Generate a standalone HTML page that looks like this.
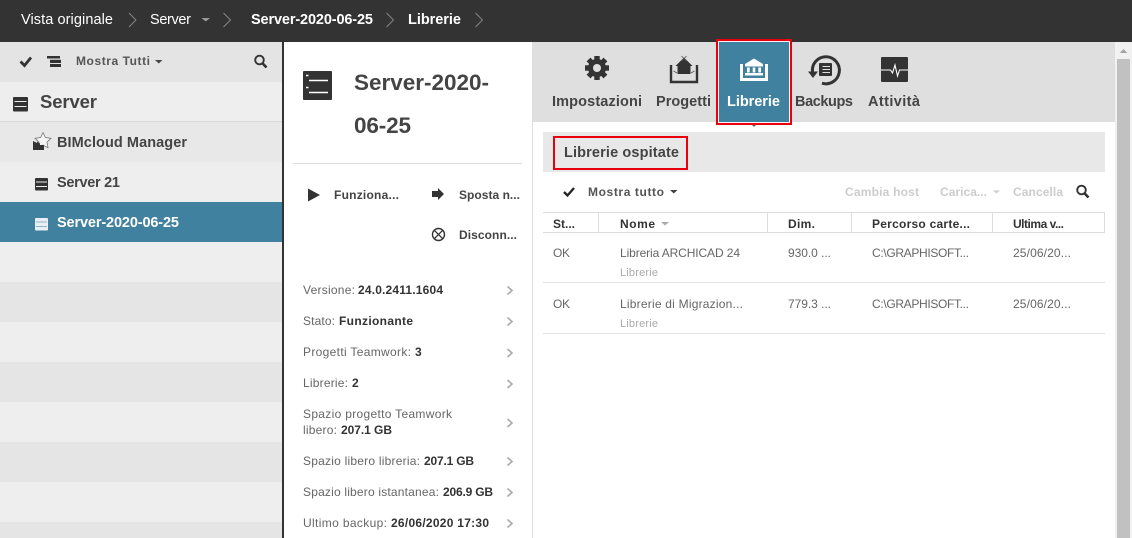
<!DOCTYPE html>
<html lang="it"><head><meta charset="utf-8"><title>Server-2020-06-25</title>
<style>
html,body{margin:0;padding:0;background:#fff;width:1132px;height:538px;overflow:hidden}
svg{display:block}
text{font-family:"Liberation Sans",sans-serif;white-space:pre}
.h{font-size:14.5px;fill:#fff}
.hb{font-size:14.5px;fill:#fff;font-weight:700}
.b14{font-size:14.5px;font-weight:700;fill:#444}
.b12{font-size:12px;font-weight:700;fill:#444}
.r12{font-size:12px;fill:#666}
.d12{font-size:12px;font-weight:700;fill:#333}
.g12{font-size:12px;font-weight:700;fill:#ccc}
.s{font-size:11px;fill:#aaa}
.chev{fill:none;stroke:#aaa;stroke-width:1.600}
.hc{fill:none;stroke:#8a8a8a;stroke-width:.9}
</style></head><body>
<svg width="1132" height="538" viewBox="0 0 1132 538" xmlns="http://www.w3.org/2000/svg">
<!-- header -->
<rect width="1132" height="42" fill="#333"/>
<text class="h" x="21" y="24" textLength="92" lengthAdjust="spacing">Vista originale</text>
<path class="hc" d="M129 13l7 7-7 7"/>
<text class="h" x="150" y="24" textLength="41" lengthAdjust="spacing">Server</text>
<path d="M201.500 18h8.500l-4.250 3.500z" fill="#999"/>
<path class="hc" d="M223.500 13l7 7-7 7"/>
<text class="hb" x="251" y="24" textLength="122" lengthAdjust="spacing">Server-2020-06-25</text>
<path class="hc" d="M386.500 13l7 7-7 7"/>
<text class="hb" x="408" y="24" textLength="53" lengthAdjust="spacing">Librerie</text>
<path class="hc" d="M475.500 13l7 7-7 7"/>

<!-- sidebar -->
<rect y="42" width="282" height="40" fill="#e4e4e4"/>
<rect y="82" width="282" height="40" fill="#eee"/>
<rect y="121" width="282" height="1" fill="#d8d8d8"/>
<rect y="122" width="282" height="40" fill="#e8e8e8"/>
<rect y="162" width="282" height="40" fill="#eee"/>
<rect y="202" width="282" height="40" fill="#40819f"/>
<rect y="242" width="282" height="40" fill="#eee"/>
<rect y="282" width="282" height="40" fill="#e5e5e5"/>
<rect y="322" width="282" height="40" fill="#eee"/>
<rect y="362" width="282" height="40" fill="#e5e5e5"/>
<rect y="402" width="282" height="40" fill="#eee"/>
<rect y="442" width="282" height="40" fill="#e5e5e5"/>
<rect y="482" width="282" height="40" fill="#eee"/>
<rect y="522" width="282" height="16" fill="#e5e5e5"/>
<rect x="282" y="42" width="2" height="496" fill="#333"/>

<path d="M20.500 61.500l4 4 6.500-8" fill="none" stroke="#333" stroke-width="2.800"/>
<path d="M47 56h13v2.500H47zM50 59.800h11v3.200H50zM50 64h11v3H50z" fill="#333"/>
<text class="b12" x="76" y="65" textLength="74" lengthAdjust="spacing" style="fill:#555">Mostra Tutti</text>
<path d="M155 60h7.500l-3.750 3.500z" fill="#444"/>
<circle cx="259.500" cy="60" r="4.300" fill="none" stroke="#333" stroke-width="1.900"/>
<path d="M262.500 63.200l4 4.300" stroke="#333" stroke-width="2.600"/>

<rect x="13" y="97" width="15" height="14.500" rx="1" fill="#333"/>
<path d="M14.500 101.500h12M14.500 106.500h12" stroke="#eee" stroke-width="1"/>
<text x="40" y="108" font-size="18.500" font-weight="700" fill="#444" textLength="57" lengthAdjust="spacing">Server</text>

<path d="M43 132.500l2.400 5 5.600.800-4 3.900 1 5.500-5-2.600-5 2.600 1-5.500-4-3.900 5.600-.800z" fill="#f4f4f4" stroke="#777" stroke-width=".8"/>
<path d="M33 150v-9l4 2v-1.500l3 2v1.500h4v5z" fill="#333"/>
<text class="b14" x="57" y="147" textLength="130" lengthAdjust="spacing">BIMcloud Manager</text>

<rect x="35" y="178" width="13" height="12.500" rx="1" fill="#333"/>
<path d="M36 182h11M36 186.500h11" stroke="#eee" stroke-width="1"/>
<text class="b14" x="57" y="187" textLength="63" lengthAdjust="spacing">Server 21</text>

<rect x="35" y="218" width="13" height="12.500" rx="1" fill="#e8f0f4"/>
<path d="M36 222h11M36 226.500h11" stroke="#8fb6c8" stroke-width="1"/>
<text class="hb" x="57" y="227" textLength="122" lengthAdjust="spacing">Server-2020-06-25</text>

<!-- middle panel -->
<rect x="532" y="42" width="1" height="496" fill="#ddd"/>
<rect x="303" y="71" width="29" height="29" rx="1" fill="#333"/>
<path d="M309 80.500h19M309 92.500h19" stroke="#fff" stroke-width="1.500"/>
<path d="M306 75.500h2.500M306 87.500h2.500" stroke="#fff" stroke-width="1.500"/>
<text x="354" y="90" font-size="22.500" font-weight="700" fill="#444" textLength="135" lengthAdjust="spacing">Server-2020-</text>
<text x="354" y="133" font-size="22.500" font-weight="700" fill="#444" textLength="57" lengthAdjust="spacing">06-25</text>
<rect x="293" y="163" width="229" height="1" fill="#ddd"/>

<path d="M308 188.500l12 6.500-12 6.500z" fill="#333"/>
<text class="b12" x="334" y="199" textLength="65" lengthAdjust="spacing">Funziona...</text>
<path d="M432 191h6v-3l6 6-6 6v-3h-6z" fill="#333"/>
<text class="b12" x="459" y="199" textLength="61" lengthAdjust="spacing">Sposta n...</text>
<circle cx="438.500" cy="234.500" r="6" fill="none" stroke="#333" stroke-width="1.400"/>
<path d="M434.300 230.300l8.400 8.400m0-8.400l-8.400 8.400" stroke="#333" stroke-width="1.300"/>
<text class="b12" x="459" y="239" textLength="58" lengthAdjust="spacing">Disconn...</text>

<text class="r12" x="303" y="294" textLength="52" lengthAdjust="spacing">Versione:</text>
<text class="d12" x="358" y="294" textLength="85" lengthAdjust="spacing">24.0.2411.1604</text>
<text class="r12" x="303" y="325" textLength="32" lengthAdjust="spacing">Stato:</text>
<text class="d12" x="339" y="325" textLength="74" lengthAdjust="spacing">Funzionante</text>
<text class="r12" x="303" y="356" textLength="108" lengthAdjust="spacing">Progetti Teamwork:</text>
<text class="d12" x="415" y="356" textLength="6" lengthAdjust="spacing">3</text>
<text class="r12" x="303" y="387" textLength="45" lengthAdjust="spacing">Librerie:</text>
<text class="d12" x="352" y="387" textLength="6" lengthAdjust="spacing">2</text>
<text class="r12" x="303" y="418" textLength="149" lengthAdjust="spacing">Spazio progetto Teamwork</text>
<text class="r12" x="303" y="434" textLength="34" lengthAdjust="spacing">libero:</text>
<text class="d12" x="341" y="434" textLength="51" lengthAdjust="spacing">207.1 GB</text>
<text class="r12" x="303" y="465" textLength="117" lengthAdjust="spacing">Spazio libero libreria:</text>
<text class="d12" x="424" y="465" textLength="50" lengthAdjust="spacing">207.1 GB</text>
<text class="r12" x="303" y="496" textLength="136" lengthAdjust="spacing">Spazio libero istantanea:</text>
<text class="d12" x="443" y="496" textLength="50" lengthAdjust="spacing">206.9 GB</text>
<text class="r12" x="303" y="527" textLength="84" lengthAdjust="spacing">Ultimo backup:</text>
<text class="d12" x="391" y="527" textLength="98" lengthAdjust="spacing">26/06/2020 17:30</text>
<path class="chev" d="M507.500 286.500l4.500 4-4.500 4M507.500 317.500l4.500 4-4.500 4M507.500 349l4.500 4-4.500 4M507.500 380l4.500 4-4.500 4M507.500 419l4.500 4-4.500 4M507.500 457.500l4.500 4-4.500 4M507.500 488.500l4.500 4-4.500 4M507.500 519.500l4.500 4-4.500 4"/>

<!-- tab bar -->
<rect x="533" y="42" width="582" height="80" fill="#dfdfdf"/>
<g transform="translate(597 68)" fill="#333">
<circle r="6.500" fill="none" stroke="#333" stroke-width="5"/>
<rect x="-2.700" y="-12" width="5.400" height="24"/>
<rect x="-2.700" y="-12" width="5.400" height="24" transform="rotate(45)"/>
<rect x="-2.700" y="-12" width="5.400" height="24" transform="rotate(90)"/>
<rect x="-2.700" y="-12" width="5.400" height="24" transform="rotate(135)"/>
<circle r="4" fill="#dfdfdf"/>
</g>
<text class="b14" x="552" y="106" textLength="90" lengthAdjust="spacing">Impostazioni</text>

<path d="M671 65v17h26V65" fill="none" stroke="#333" stroke-width="2.400"/>
<path d="M684 57.500l8.500 8.500h-2v8h-13v-8h-2z" fill="#333"/>
<path d="M681.500 56l5 5m0-5l-5 5M673.500 71l3.500 2M694.500 71l-3.500 2" stroke="#555" stroke-width=".8"/>
<text class="b14" x="656" y="106" textLength="55" lengthAdjust="spacing">Progetti</text>

<rect x="719" y="42" width="70" height="80" fill="#40819f"/>
<path d="M749 122h10l-5 5z" fill="#7d5a68"/>
<rect x="717" y="40" width="74" height="84" fill="none" stroke="#e8000d" stroke-width="2"/>
<rect x="718.500" y="41.500" width="71" height="81" fill="none" stroke="#f4f4f4" stroke-width="1"/>
<path d="M741.500 64v15.500h25V64" fill="none" stroke="#fff" stroke-width="3"/>
<path d="M754 58.500l9 5.500v2.500h-18V64z" fill="#fff"/>
<path d="M747 67.500h2.700v5H747zM752.700 67.500h2.600v5h-2.600zM758.300 67.500h2.700v5h-2.700zM745 73h18v2.500h-18z" fill="#fff"/>
<text class="hb" x="727" y="106" textLength="53" lengthAdjust="spacing">Librerie</text>

<path d="M812.500 72A13.500 13.500 0 1 1 822 83.200" fill="none" stroke="#333" stroke-width="3"/>
<path d="M808 71.500h10l-5 6.500z" fill="#333"/>
<rect x="819" y="63" width="13" height="13" rx="1" fill="#333"/>
<path d="M822.500 66.500h7.500M822.500 69.500h7.500M822.500 72.500h7.500" stroke="#dfdfdf" stroke-width="1"/>
<text class="b14" x="795" y="106" textLength="58" lengthAdjust="spacing">Backups</text>

<rect x="881" y="57" width="27" height="25" rx="1" fill="#333"/>
<path d="M881 70h9.500l2 3 2.500-8 2.500 11 2-6h8.500" fill="none" stroke="#fff" stroke-width="1.100"/>
<text class="b14" x="868" y="106" textLength="52" lengthAdjust="spacing">Attività</text>

<!-- section -->
<rect x="543" y="132" width="562" height="40" fill="#e8e8e8"/>
<rect x="554" y="137" width="133" height="32" fill="none" stroke="#e8000d" stroke-width="2"/>
<text class="b14" x="564" y="157" textLength="115" lengthAdjust="spacing">Librerie ospitate</text>

<path d="M564 192l3.500 3.500 6.500-7.500" fill="none" stroke="#222" stroke-width="2.300"/>
<text class="b12" x="588" y="196" textLength="76" lengthAdjust="spacing" style="fill:#555">Mostra tutto</text>
<path d="M670 190h7.500l-3.750 3.500z" fill="#444"/>
<text class="g12" x="845" y="196" textLength="74" lengthAdjust="spacing">Cambia host</text>
<text class="g12" x="940" y="196" textLength="47" lengthAdjust="spacing">Carica...</text>
<path d="M993 190.500h7l-3.500 3z" fill="#ccc"/>
<text class="g12" x="1013" y="196" textLength="50" lengthAdjust="spacing">Cancella</text>
<circle cx="1081.500" cy="190" r="4.300" fill="none" stroke="#333" stroke-width="1.900"/>
<path d="M1084.500 193.200l4 4.300" stroke="#333" stroke-width="2.600"/>

<!-- table -->
<rect x="543" y="212" width="562" height="1" fill="#ddd"/>
<rect x="543" y="232" width="562" height="1" fill="#ddd"/>
<rect x="598" y="212" width="1" height="21" fill="#ddd"/>
<rect x="767" y="212" width="1" height="21" fill="#ddd"/>
<rect x="851" y="212" width="1" height="21" fill="#ddd"/>
<rect x="992" y="212" width="1" height="21" fill="#ddd"/>
<rect x="1104" y="212" width="1" height="21" fill="#ddd"/>
<text class="d12" x="553" y="228" textLength="22" lengthAdjust="spacing">St...</text>
<text class="d12" x="620" y="228" textLength="35" lengthAdjust="spacing">Nome</text>
<path d="M661 222h8l-4 3.500z" fill="#aaa"/>
<text class="d12" x="788" y="228" textLength="27" lengthAdjust="spacing">Dim.</text>
<text class="d12" x="872" y="228" textLength="98" lengthAdjust="spacing">Percorso carte...</text>
<text class="d12" x="1013" y="228" textLength="51" lengthAdjust="spacing">Ultima v...</text>

<text class="r12" x="553" y="257" textLength="17" lengthAdjust="spacing">OK</text>
<text class="r12" x="620" y="257" textLength="120" lengthAdjust="spacing">Libreria ARCHICAD 24</text>
<text class="s" x="620" y="276" textLength="38" lengthAdjust="spacing">Librerie</text>
<text class="r12" x="788" y="257" textLength="43" lengthAdjust="spacing">930.0 ...</text>
<text class="r12" x="872" y="257" textLength="97" lengthAdjust="spacing">C:\GRAPHISOFT...</text>
<text class="r12" x="1013" y="257" textLength="58" lengthAdjust="spacing">25/06/20...</text>
<rect x="543" y="282" width="562" height="1" fill="#e5e5e5"/>

<text class="r12" x="553" y="308" textLength="17" lengthAdjust="spacing">OK</text>
<text class="r12" x="620" y="308" textLength="123" lengthAdjust="spacing">Librerie di Migrazion...</text>
<text class="s" x="620" y="327" textLength="38" lengthAdjust="spacing">Librerie</text>
<text class="r12" x="788" y="308" textLength="43" lengthAdjust="spacing">779.3 ...</text>
<text class="r12" x="872" y="308" textLength="97" lengthAdjust="spacing">C:\GRAPHISOFT...</text>
<text class="r12" x="1013" y="308" textLength="58" lengthAdjust="spacing">25/06/20...</text>
<rect x="543" y="333" width="562" height="1" fill="#e5e5e5"/>

<!-- scrollbar -->
<rect x="1115" y="42" width="17" height="496" fill="#f1f1f1"/>
<rect x="1117" y="59" width="13" height="479" fill="#c1c1c1"/>
<path d="M1123.500 49l3.750 4h-7.500z" fill="#a3a3a3"/>
</svg>
</body></html>
